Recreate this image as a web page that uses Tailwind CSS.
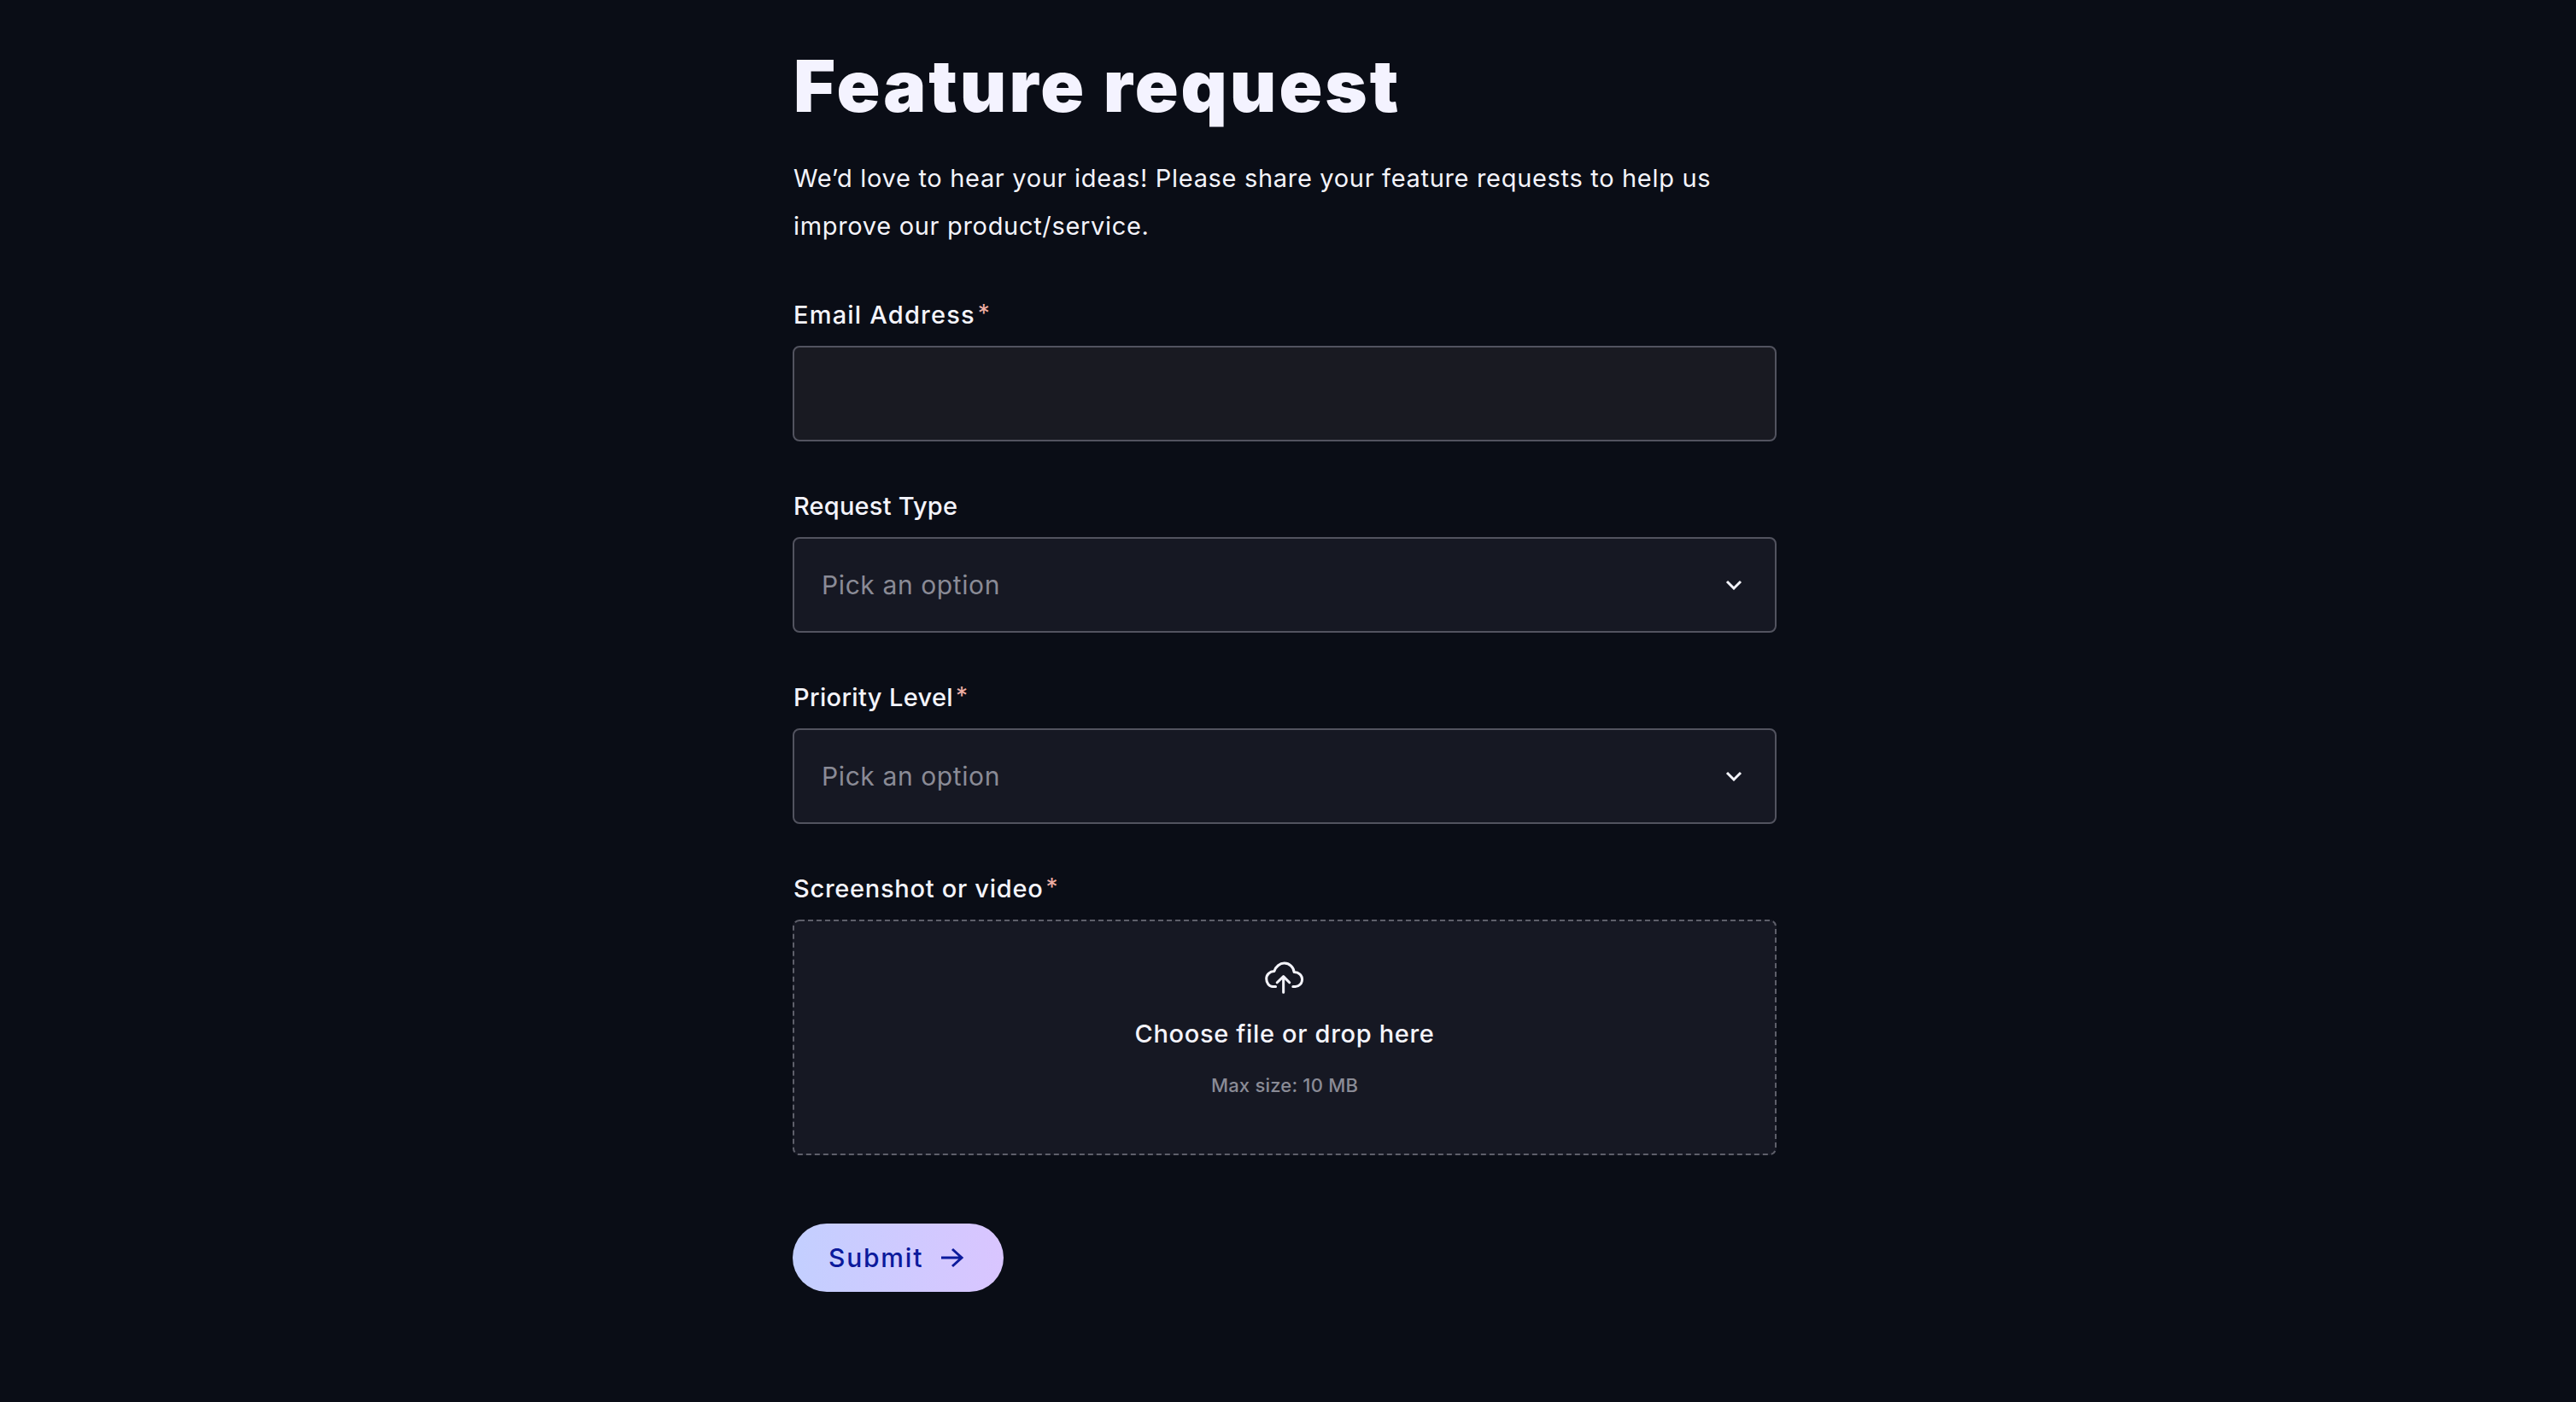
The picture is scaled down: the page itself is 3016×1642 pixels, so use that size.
<!DOCTYPE html>
<html>
  <head>
    <meta charset="UTF-8" />
    <script src="https://cdn.jsdelivr.net/npm/@tailwindcss/browser@4"></script>
    <title>Feature request</title>
  </head>
  <body class="bg-[#0a0d16] h-[1642px] overflow-hidden font-['Inter',sans-serif] text-[#f4f4fb]">
    <main class="ml-[928px] w-[1152px] pt-[41px]">
      <h1 class="text-[84px] leading-[120px] font-black tracking-[3px] text-[#f4f3ff] pl-[1px]">Feature request</h1>
      <p class="mt-[20px] text-[29px] leading-[56px] tracking-[0.68px] w-[1120px] pl-[1px]">We’d love to hear your ideas! Please share your feature requests to help us improve our product/service.</p>

      <form class="mt-[54px] flex flex-col gap-[54px]">
        <div class="flex flex-col gap-[14px]">
          <label class="text-[29px] leading-[44px] tracking-[1.2px] font-medium pl-[1px] flex">Email Address<span class="ml-[3px] text-[28px] leading-[40px] font-normal text-[#eeaea3]">*</span></label>
          <div class="h-[112px] rounded-[8px] border-2 border-[#52535f] bg-[#191a22]"></div>
        </div>
        <div class="flex flex-col gap-[14px]">
          <label class="text-[29px] leading-[44px] tracking-[0.2px] font-medium pl-[1px]">Request Type</label>
          <div class="h-[112px] rounded-[8px] border-2 border-[#52535f] bg-[#161823] px-[32px] flex items-center justify-between">
            <span class="text-[30px] tracking-[0.6px] text-[#8a8b96]">Pick an option</span>
            <svg class="mr-[6px]" width="20" height="12" viewBox="0 0 20 12" fill="none" stroke="#f4f4fb" stroke-width="3"><path d="M2 2l8 8 8-8" /></svg>
          </div>
        </div>
        <div class="flex flex-col gap-[14px]">
          <label class="text-[29px] leading-[44px] tracking-[0.35px] font-medium pl-[1px] flex">Priority Level<span class="ml-[3px] text-[28px] leading-[40px] font-normal text-[#eeaea3]">*</span></label>
          <div class="h-[112px] rounded-[8px] border-2 border-[#52535f] bg-[#161823] px-[32px] flex items-center justify-between">
            <span class="text-[30px] tracking-[0.6px] text-[#8a8b96]">Pick an option</span>
            <svg class="mr-[6px]" width="20" height="12" viewBox="0 0 20 12" fill="none" stroke="#f4f4fb" stroke-width="3"><path d="M2 2l8 8 8-8" /></svg>
          </div>
        </div>
        <div class="flex flex-col gap-[14px]">
          <label class="text-[29px] leading-[44px] tracking-[0.72px] font-medium pl-[1px] flex">Screenshot or video<span class="ml-[3px] text-[28px] leading-[40px] font-normal text-[#eeaea3]">*</span></label>
          <div class="relative h-[276px] rounded-[8px] bg-[#161823] flex flex-col items-center pt-[48px]">
            <!-- css dashed border is too short here, so the dashes are drawn -->
            <svg class="absolute inset-0" width="1152" height="276" fill="none"><rect x="1" y="1" width="1150" height="274" rx="7" stroke="#5e5f6a" stroke-width="2" stroke-dasharray="6 4" /></svg>
            <svg width="48" height="40" viewBox="95 45 142 118" fill="none" stroke="#f4f4fb" stroke-width="9" stroke-linecap="round" stroke-linejoin="round"><path d="M135 135H125C112 135 103 122 103 108C103 93 115 82 130 82C135 65 150 54 165 54C183 54 197 67 199 85C216 85 227 96 227 110C227 124 216 135 203 135H195" /><path d="M162 155V100M140 121L162 100L183 121" /></svg>
            <span class="mt-[24px] text-[29px] leading-[44px] tracking-[0.67px] font-medium">Choose file or drop here</span>
            <span class="mt-[22px] text-[22px] leading-[32px] tracking-[0.2px] font-medium text-[#8a8b96]">Max size: 10 MB</span>
          </div>
        </div>
      </form>

      <button class="mt-[80px] h-[80px] w-[247px] rounded-full bg-linear-to-r from-[#c3cfff] to-[#d9c5ff] text-[#0b1a9c] flex items-center pl-[42px] gap-[20px] text-[30px] font-medium tracking-[1.8px]">
        Submit
        <svg width="28" height="24" viewBox="0 0 28 24" fill="none" stroke="#0b1a9c" stroke-width="3"><path d="M1 12H25M14 2L25 12L14 22" /></svg>
      </button>
    </main>
  </body>
</html>
